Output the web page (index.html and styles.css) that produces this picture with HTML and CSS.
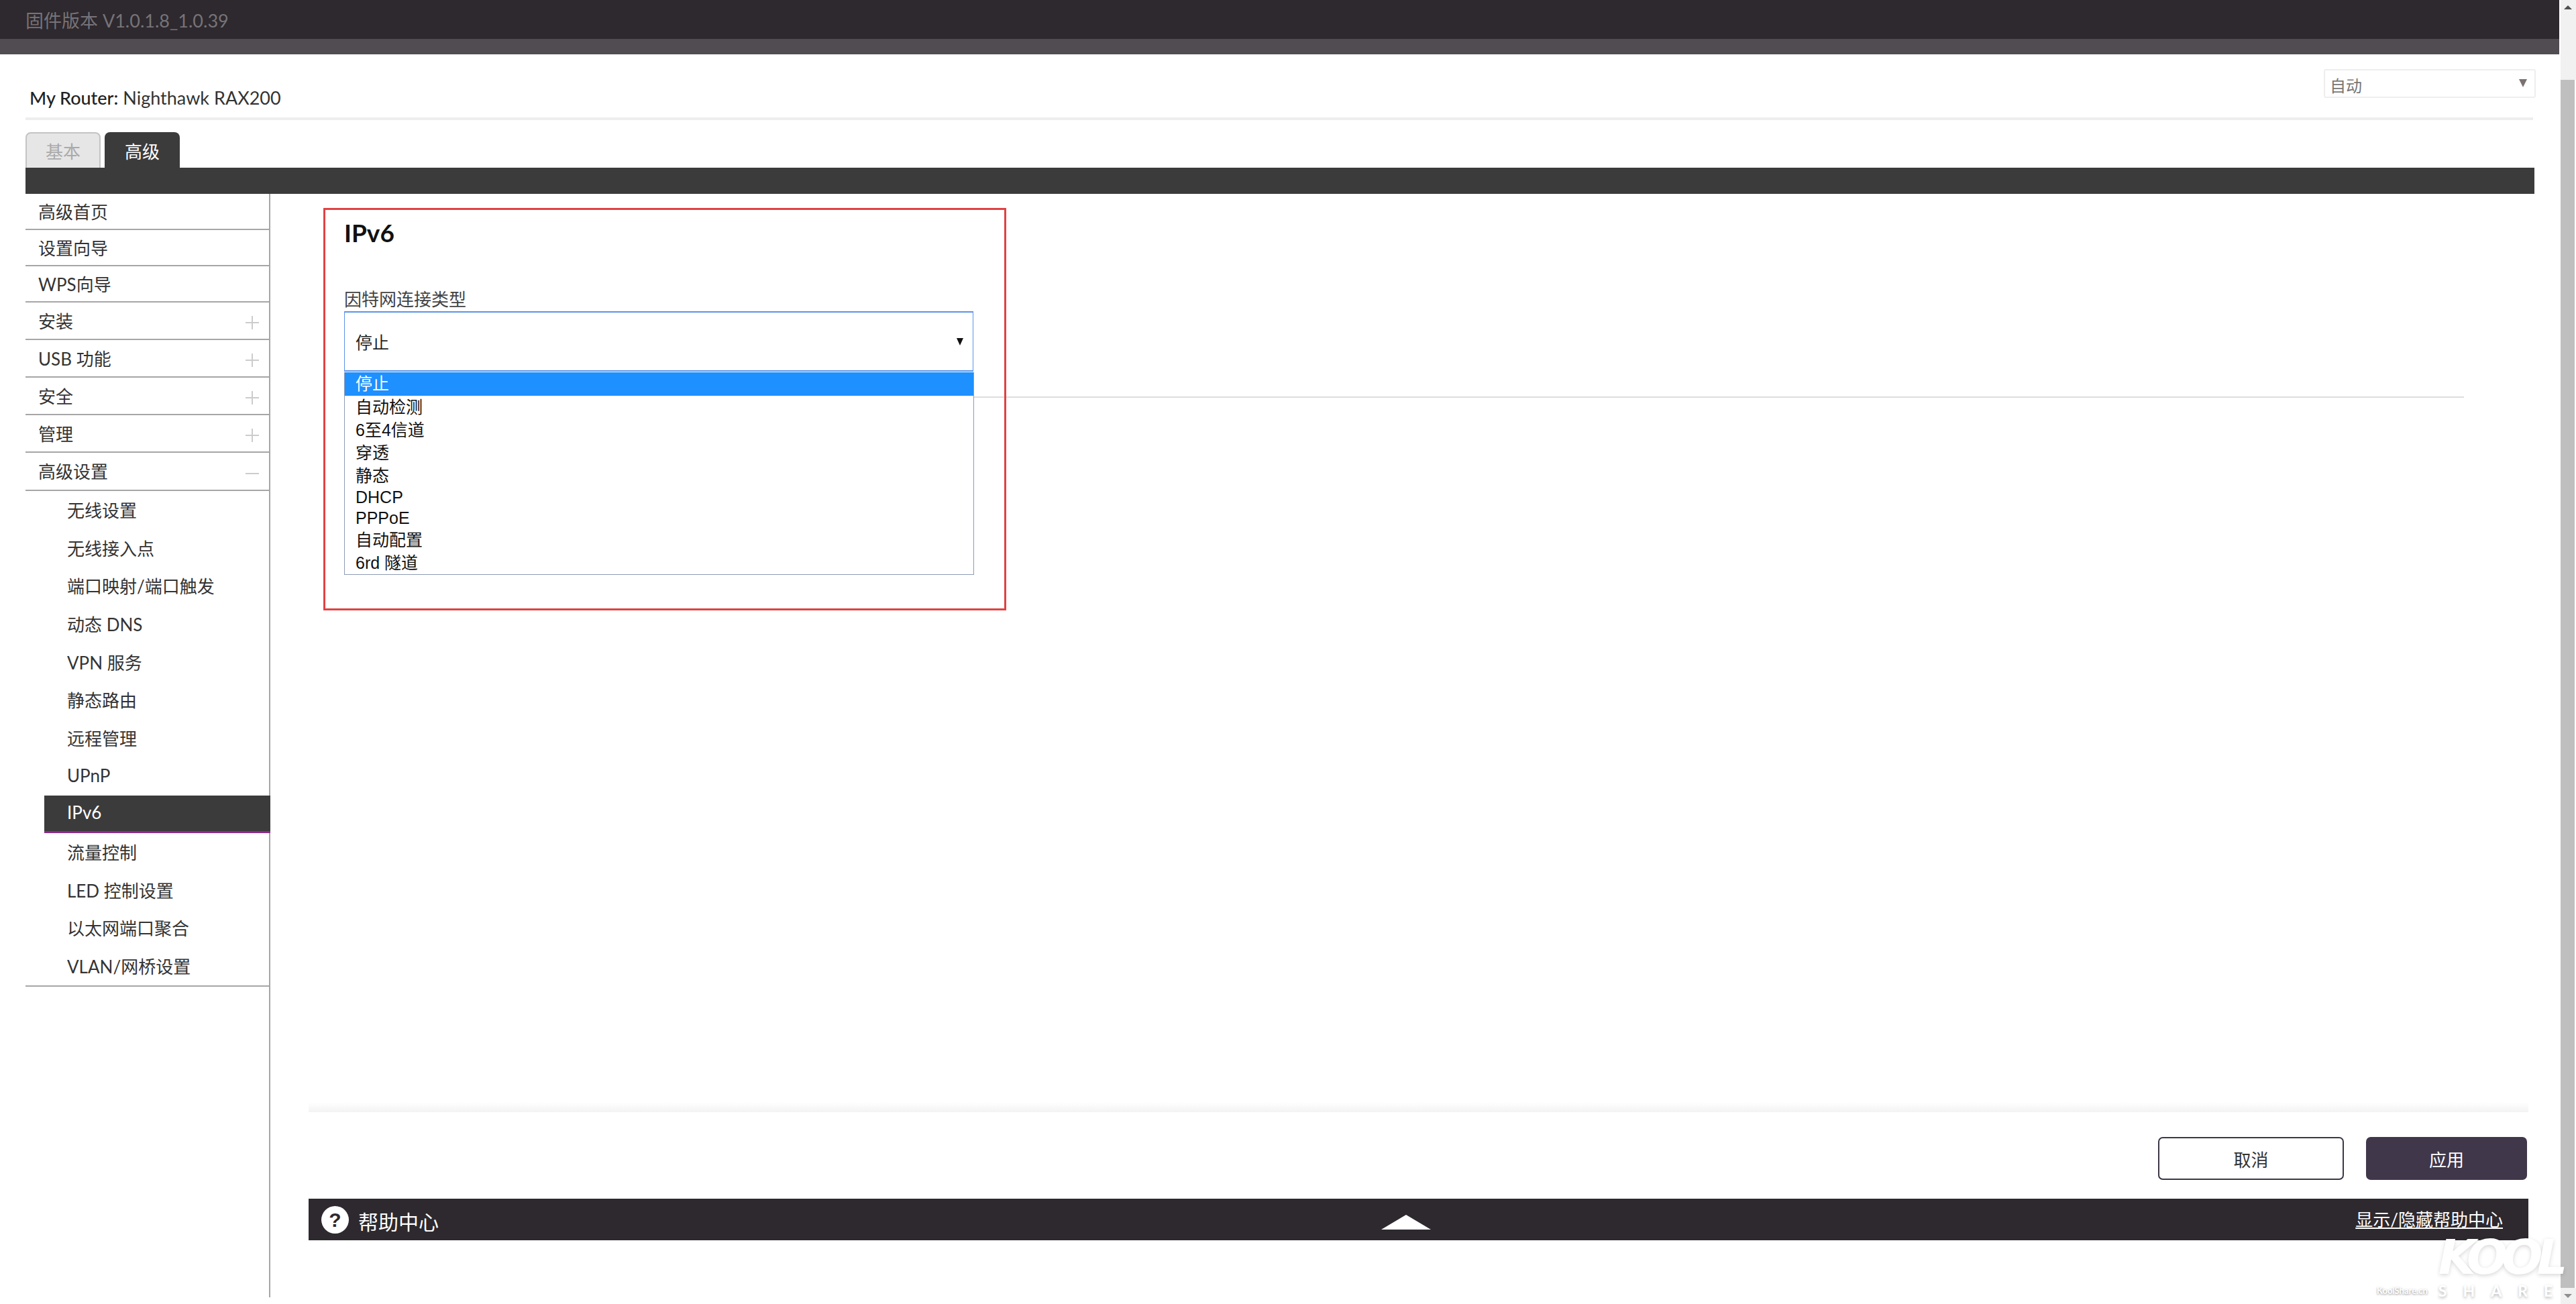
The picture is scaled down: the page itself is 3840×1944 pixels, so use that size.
FILE: index.html
```html
<!DOCTYPE html>
<html lang="zh-CN">
<head>
    <meta charset="UTF-8">
    <title>NETGEAR Router RAX200</title>
    <link rel="stylesheet" href="styles.css">
</head>
<body>
    <div class="page">
        <!-- Header -->
        <div class="header">
            <span class="firmware">固件版本 V1.0.1.8_1.0.39</span>
        </div>
        <div class="header-strip"></div>

        <div class="wrap">
            <div class="router-row">
                <p class="router-name"><b>My Router:</b> Nighthawk RAX200</p>
                <div class="lang-select">
                    <span>自动</span>
                    <i class="lang-arrow"></i>
                </div>
            </div>

            <!-- Tabs -->
            <div class="tabs">
                <a class="tab">基本</a>
                <a class="tab active">高级</a>
            </div>
            <div class="tab-bar"></div>

            <div class="main">
                <!-- Sidebar -->
                <div class="sidebar">
                    <a class="nav-item short">高级首页</a>
                    <a class="nav-item short">设置向导</a>
                    <a class="nav-item short">WPS向导</a>
                    <a class="nav-item">安装<i class="plus"></i></a>
                    <a class="nav-item">USB 功能<i class="plus"></i></a>
                    <a class="nav-item">安全<i class="plus"></i></a>
                    <a class="nav-item">管理<i class="plus"></i></a>
                    <a class="nav-item open">高级设置<i class="minus"></i></a>
                    <div class="sub-list">
                        <a class="sub-item">无线设置</a>
                        <a class="sub-item">无线接入点</a>
                        <a class="sub-item">端口映射/端口触发</a>
                        <a class="sub-item">动态 DNS</a>
                        <a class="sub-item">VPN 服务</a>
                        <a class="sub-item">静态路由</a>
                        <a class="sub-item">远程管理</a>
                        <a class="sub-item">UPnP</a>
                        <a class="sub-item active">IPv6</a>
                        <a class="sub-item">流量控制</a>
                        <a class="sub-item">LED 控制设置</a>
                        <a class="sub-item">以太网端口聚合</a>
                        <a class="sub-item">VLAN/网桥设置</a>
                    </div>
                </div>

                <!-- Main Content -->
                <div class="content">
                    <div class="red-box"></div>

                    <div class="form">
                        <h1>IPv6</h1>
                        <label class="field-label">因特网连接类型</label>
                        <div class="select-wrap">
                            <div class="select-box">
                                <span>停止</span>
                                <i class="select-arrow"></i>
                            </div>
                            <ul class="select-menu">
                                <li class="selected">停止</li>
                                <li>自动检测</li>
                                <li>6至4信道</li>
                                <li>穿透</li>
                                <li>静态</li>
                                <li class="latin">DHCP</li>
                                <li class="latin">PPPoE</li>
                                <li>自动配置</li>
                                <li>6rd 隧道</li>
                            </ul>
                        </div>
                        <div class="form-line"></div>
                    </div>

                    <div class="footer-line"></div>
                    <div class="actions">
                        <button class="btn btn-cancel">取消</button>
                        <button class="btn btn-apply">应用</button>
                    </div>

                    <div class="help-bar">
                        <span class="help-icon">?</span>
                        <span class="help-title">帮助中心</span>
                        <svg class="help-arrow" width="74" height="22" viewBox="0 0 74 22"><polygon points="37,0 74,22 0,22" fill="#fff"/></svg>
                        <a class="help-link">显示/隐藏帮助中心</a>
                    </div>
                </div>
            </div>
        </div>
    </div>

    <!-- Scrollbar -->
    <div class="scrollbar">
        <div class="scroll-top"><i class="scroll-up"></i></div>
        <div class="scroll-thumb"></div>
        <div class="scroll-bottom"><i class="scroll-down"></i></div>
    </div>

    <!-- Watermark -->
    <div class="watermark">
        <span class="wm-site">KoolShare.cn</span>
        <div class="wm-logo">
            <span class="wm-kool">KOOL</span>
            <span class="wm-share">SHARE</span>
        </div>
    </div>
</body>
</html>
```

FILE: styles.css
```css
/* General Reset */
* {
    margin: 0;
    padding: 0;
    box-sizing: border-box;
}

body {
    font-family: Lato, "Noto Sans CJK SC", sans-serif;
    font-size: 26px;
    color: #333;
    background-color: #fff;
    display: flex;
    height: 1944px;
    overflow: hidden;
    position: relative;
}

.page {
    flex: 1;
    display: flex;
    flex-direction: column;
    min-width: 0;
}

/* Header */
.header {
    height: 58px;
    background-color: #2d292e;
    padding-left: 38px;
    display: flex;
    align-items: center;
}

.firmware {
    color: #777378;
    font-size: 27px;
}

.header-strip {
    height: 23px;
    background-color: #504c52;
}

.wrap {
    flex: 1;
    display: flex;
    flex-direction: column;
    padding: 0 37px 10px 38px;
    min-height: 0;
}

/* Router row */
.router-row {
    height: 98px;
    margin-right: 2px;
    border-bottom: 4px solid #eee;
    display: flex;
    justify-content: space-between;
    align-items: flex-start;
}

.router-name {
    margin: 47px 0 0 6px;
    line-height: 36px;
    font-size: 27px;
}

.router-name b {
    font-weight: 500;
    color: #222;
}

.lang-select {
    width: 316px;
    height: 43px;
    margin: 22px -4px 0 0;
    border: 2px solid #eee;
    border-radius: 3px;
    display: flex;
    justify-content: space-between;
    align-items: center;
    padding: 4px 11px 0 7px;
    font-size: 24px;
    color: #777;
}

.lang-arrow {
    width: 0;
    height: 0;
    margin-top: -6px;
    border-left: 6px solid transparent;
    border-right: 6px solid transparent;
    border-top: 12px solid #7a7270;
}

/* Tabs */
.tabs {
    display: flex;
    gap: 6px;
    margin-top: 18px;
}

.tab {
    width: 112px;
    height: 53px;
    border: 2px solid #c4c4c4;
    border-bottom: none;
    border-radius: 8px 8px 0 0;
    background-color: #e6e6e6;
    color: #aaa;
    display: flex;
    align-items: center;
    justify-content: center;
}

.tab.active {
    background-color: #3c3b3c;
    border-color: #3c3b3c;
    color: #fff;
}

.tab-bar {
    height: 39px;
    background-color: #3c3b3c;
}

.main {
    flex: 1;
    display: flex;
    min-height: 0;
}

/* Sidebar */
.sidebar {
    width: 365px;
    flex: none;
    border-right: 2px solid #a6a6a6;
}

.nav-item {
    height: 56px;
    padding-left: 19px;
    border-bottom: 2px solid #a6a6a6;
    display: flex;
    align-items: center;
    justify-content: space-between;
    padding-right: 15px;
    padding-bottom: 2px;
}

.nav-item.short {
    height: 54px;
}

.nav-item.open {
    height: 57px;
}

.plus, .minus {
    width: 20px;
    height: 20px;
    margin-top: 8px;
    position: relative;
}

.plus::before, .minus::before {
    content: "";
    position: absolute;
    left: 0;
    top: 9px;
    width: 20px;
    height: 2px;
    background-color: #ccc;
}

.plus::after {
    content: "";
    position: absolute;
    left: 9px;
    top: 0;
    width: 2px;
    height: 20px;
    background-color: #ccc;
}

.sub-list {
    border-bottom: 2px solid #a6a6a6;
}

.sub-item {
    height: 56.7px;
    padding: 0 0 2px 34px;
    margin-left: 28px;
    margin-right: -2px;
    display: flex;
    align-items: center;
}

.sub-item.active {
    background-color: #3c3b3c;
    color: #fff;
    border-bottom: 3px solid #8e2a8c;
    position: relative;
}

/* Main Content */
.content {
    flex: 1;
    min-width: 0;
    padding: 0 0 85px 57px;
    margin-right: 9px;
    display: flex;
    flex-direction: column;
    position: relative;
}

.red-box {
    position: absolute;
    left: 79px;
    top: 21px;
    width: 1018px;
    height: 600px;
    border: 3px solid #e04244;
    z-index: 3;
}

.form {
    padding: 35px 0 0 53px;
}

.form h1 {
    font-size: 37px;
    line-height: 46px;
    font-weight: 700;
    color: #111;
    margin-bottom: 59px;
}

.field-label {
    display: block;
    line-height: 34px;
    margin-bottom: 1px;
    color: #444;
}

/* Select */
.select-wrap {
    position: relative;
    width: 938px;
    margin-bottom: 37px;
}

.select-box {
    height: 90px;
    border: 1px solid #5b93e8;
    border-top-width: 2px;
    border-bottom-width: 2px;
    display: flex;
    align-items: center;
    justify-content: space-between;
    padding: 0 14px 0 16px;
    font-family: "Liberation Sans", "Noto Sans CJK SC", sans-serif;
    font-size: 25px;
    color: #222;
}

.select-arrow {
    width: 0;
    height: 0;
    border-left: 5px solid transparent;
    border-right: 5px solid transparent;
    border-top: 11px solid #111;
}

.select-menu {
    position: absolute;
    left: 0;
    top: 91px;
    width: 939px;
    list-style: none;
    background-color: #fff;
    border: 1px solid #8d9bb5;
    border-top: none;
    font-family: "Liberation Sans", "Noto Sans CJK SC", sans-serif;
    font-size: 25px;
    color: #111;
    z-index: 2;
}

.select-menu li {
    height: 34px;
    line-height: 34px;
    padding-left: 16px;
    white-space: nowrap;
}

.select-menu li.latin {
    height: 31px;
    line-height: 31px;
}

.select-menu li.selected {
    height: 35px;
    background-color: #1e90ff;
    color: #fff;
}

.form-line {
    height: 2px;
    margin-right: 96px;
    background-color: #ddd;
}

/* Footer */
.footer-line {
    height: 15px;
    margin-top: auto;
    background: linear-gradient(to bottom, #fff, #f3f3f3);
}

.actions {
    display: flex;
    justify-content: flex-end;
    gap: 33px;
    padding-right: 2px;
    margin: 37px 0 28px;
}

.btn {
    height: 64px;
    border-radius: 7px;
    font-family: inherit;
    font-size: 26px;
    cursor: pointer;
}

.btn-cancel {
    width: 277px;
    background-color: #fff;
    border: 2px solid #3c3646;
    color: #333;
}

.btn-apply {
    width: 240px;
    background-color: #40374a;
    border: none;
    color: #fff;
}

.help-bar {
    height: 62px;
    background-color: #2d292e;
    color: #fff;
    display: flex;
    align-items: center;
    padding: 0 38px 0 19px;
}

.help-icon {
    width: 41px;
    height: 41px;
    border-radius: 50%;
    background-color: #fff;
    color: #2d292e;
    font-family: "Liberation Sans", sans-serif;
    font-size: 30px;
    font-weight: 700;
    line-height: 41px;
    text-align: center;
}

.help-title {
    margin-left: 14px;
    margin-top: 4px;
    font-size: 30px;
}

.help-arrow {
    margin: 8px 0 0 1405px;
}

.help-link {
    margin-left: auto;
    margin-top: -4px;
    color: #fff;
    text-decoration: underline;
}

/* Scrollbar */
.scrollbar {
    width: 25px;
    flex: none;
    padding-left: 2px;
    display: flex;
    flex-direction: column;
}

.scroll-top {
    height: 119px;
    background-color: #f1f1f1;
    padding: 8px 0 0 5px;
}

.scroll-up {
    display: block;
    width: 0;
    height: 0;
    border-left: 6px solid transparent;
    border-right: 6px solid transparent;
    border-bottom: 6px solid #505050;
}

.scroll-thumb {
    flex: 1;
    background-color: #bfbfbf;
    margin-right: 2px;
}

.scroll-bottom {
    height: 24px;
    background-color: #f1f1f1;
    padding: 9px 0 0 5px;
}

.scroll-down {
    display: block;
    width: 0;
    height: 0;
    border-left: 6px solid transparent;
    border-right: 6px solid transparent;
    border-top: 6px solid #909090;
}

/* Watermark */
.watermark {
    position: absolute;
    left: 3543px;
    top: 1838px;
    display: flex;
    align-items: flex-end;
    gap: 16px;
    color: #fff;
    z-index: 5;
}

.wm-site {
    font-size: 13px;
    font-weight: 700;
    margin-bottom: 6px;
    text-shadow: 0 1px 3px #888;
}

.wm-logo {
    display: flex;
    flex-direction: column;
}

.wm-kool {
    font-family: "DejaVu Sans", sans-serif;
    font-size: 72px;
    font-style: italic;
    font-weight: 700;
    line-height: 72px;
    letter-spacing: -9px;
    text-shadow: 0 2px 6px rgba(0, 0, 0, 0.16);
}

.wm-share {
    font-size: 23px;
    font-weight: 700;
    line-height: 28px;
    letter-spacing: 24px;
    white-space: nowrap;
    text-shadow: 0 2px 4px rgba(0, 0, 0, 0.3);
}
```
